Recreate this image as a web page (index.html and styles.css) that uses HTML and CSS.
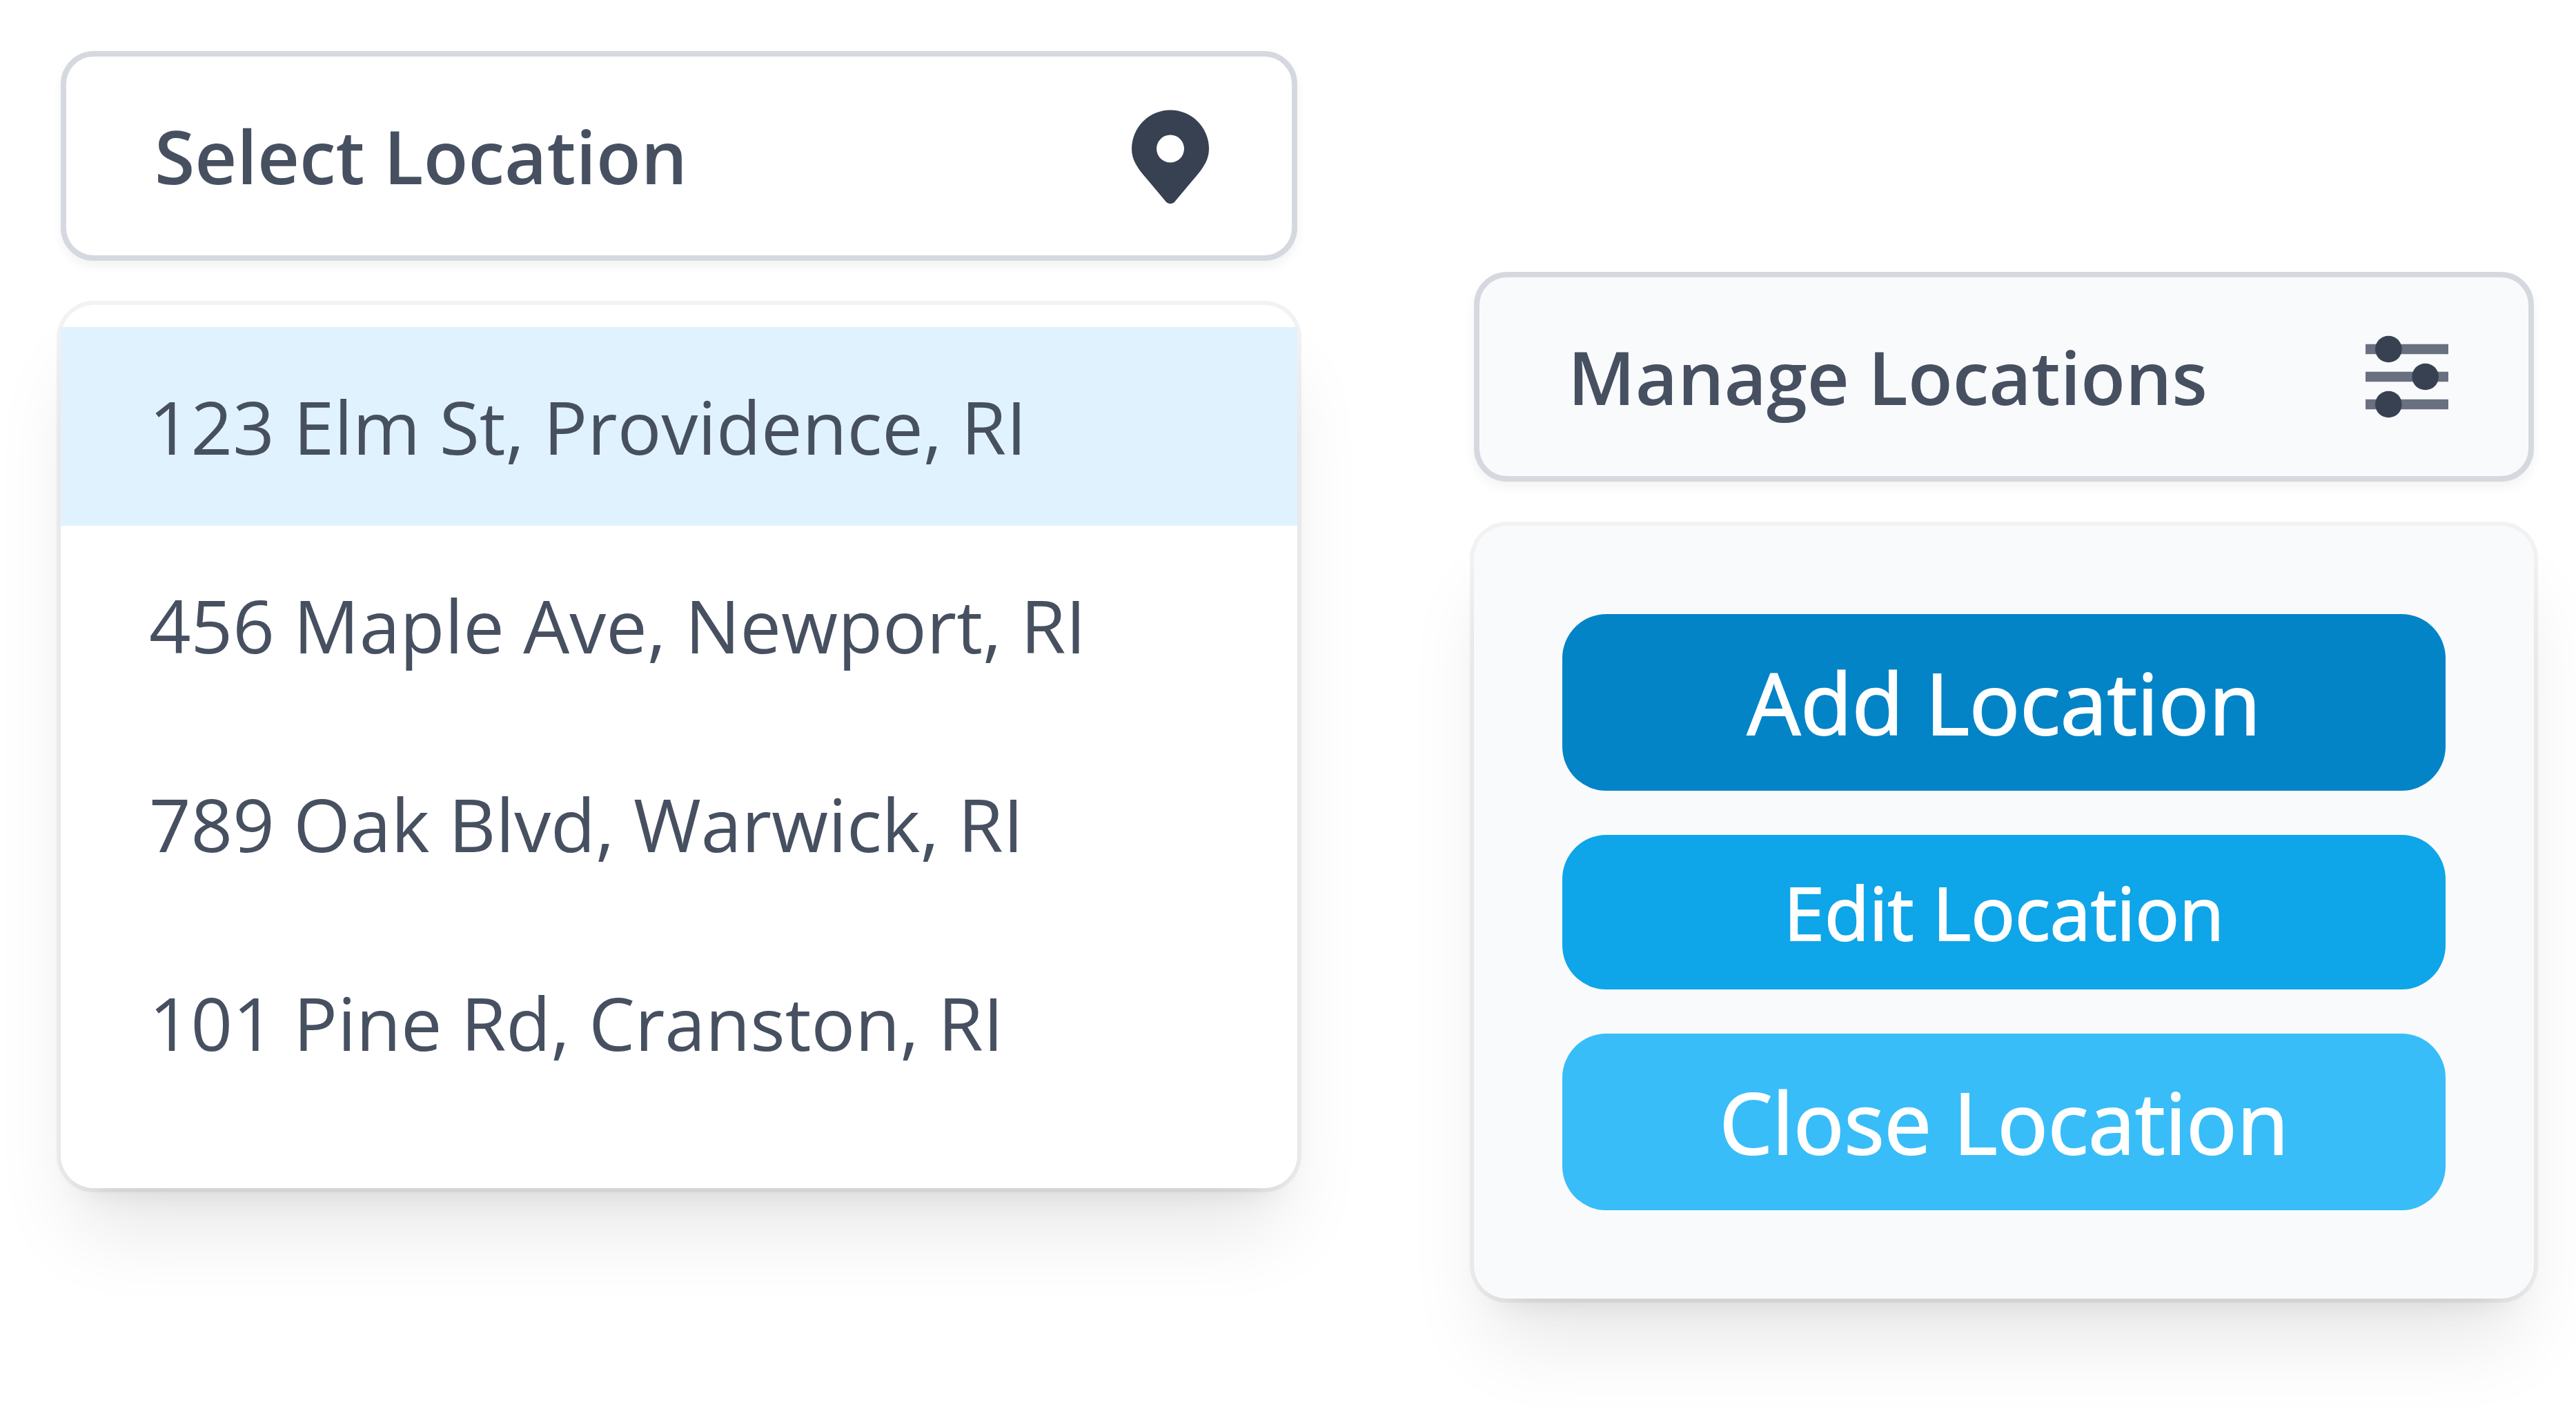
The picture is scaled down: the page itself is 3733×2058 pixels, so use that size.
FILE: index.html
```html
<!DOCTYPE html>
<html lang="en">
<head>
  <meta charset="utf-8">
  <meta name="viewport" content="width=device-width, initial-scale=1">
  <title>Locations</title>
  <link rel="stylesheet" href="styles.css">
</head>
<body>
  <main class="page">
    <section class="dropdown">
      <button class="trigger" type="button" aria-haspopup="true" aria-expanded="true" aria-controls="location-menu">
        <span>Select Location</span>
        <svg class="icon" viewBox="0 0 20 20" aria-hidden="true">
          <path fill="currentColor" fill-rule="evenodd" d="M9.3 18.4 6.1 14.6C4.3 12.5 3 11 3 8.7a7 7 0 0 1 14 0c0 2.300-1.300 3.800-3.100 5.900L10.700 18.400q-.7.5-1.400 0zM10 11.200a2.500 2.500 0 1 0 0-5 2.500 2.500 0 0 0 0 5z"/>
        </svg>
      </button>
      <ul class="panel menu" id="location-menu">
        <li><a class="option option-active" href="#elm">123 Elm St, Providence, RI</a></li>
        <li><a class="option" href="#maple">456 Maple Ave, Newport, RI</a></li>
        <li><a class="option" href="#oak">789 Oak Blvd, Warwick, RI</a></li>
        <li><a class="option" href="#pine">101 Pine Rd, Cranston, RI</a></li>
      </ul>
    </section>

    <section class="dropdown dropdown-manage">
      <button class="trigger" type="button" aria-haspopup="true" aria-expanded="true" aria-controls="manage-menu">
        <span>Manage Locations</span>
        <svg class="icon" viewBox="0 0 24 24" aria-hidden="true">
          <path class="rails" d="M3 6h18M3 12h18M3 18h18"/>
          <g fill="currentColor">
            <circle cx="8" cy="6" r="2.9"/>
            <circle cx="16" cy="12" r="2.9"/>
            <circle cx="8" cy="18" r="2.9"/>
          </g>
        </svg>
      </button>
      <div class="panel actions" id="manage-menu">
        <button class="action action-add" type="button">Add Location</button>
        <button class="action action-edit" type="button">Edit Location</button>
        <button class="action action-close" type="button">Close Location</button>
      </div>
    </section>
  </main>
</body>
</html>
```

FILE: styles.css
```css
* {
  box-sizing: border-box;
}

body {
  margin: 0;
  background: #fff;
  color: #465060;
  font-family: "Open Sans", "Noto Sans", sans-serif;
}

.page {
  display: grid;
  grid-template-columns: 7fr 6fr;
  align-items: start;
  gap: 256px;
  padding: 74px 61px 174px 88px;
}

.dropdown {
  display: grid;
  gap: 64px;
}

.dropdown-manage {
  padding-top: 320px;
}

.trigger {
  display: flex;
  align-items: center;
  justify-content: space-between;
  width: 100%;
  padding: 64px 96px 64px 128px;
  border: 8px solid #d5d9df;
  border-radius: 48px;
  background: #fff;
  box-shadow: 0 8px 16px rgb(0 0 0 / 5%);
  color: inherit;
  font: 600 106px/160px "Open Sans", "Noto Sans", sans-serif;
}

.dropdown-manage .trigger,
.actions {
  background: #f9fafc;
}

.icon {
  width: 160px;
  height: 160px;
  color: #374151;
}

.rails {
  fill: none;
  stroke: #697080;
  stroke-width: 2.2;
}

.panel {
  margin: 0;
  border-radius: 48px;
  box-shadow:
    0 0 0 6px rgb(0 0 0 / 5%),
    0 80px 120px -24px rgb(0 0 0 / 10%),
    0 32px 48px -32px rgb(0 0 0 / 10%);
}

.menu {
  padding: 32px 0 96px;
  background: #fff;
  list-style: none;
}

.option {
  display: block;
  padding: 64px 128px;
  color: inherit;
  font-size: 106px;
  line-height: 160px;
  text-decoration: none;
}

.option-active {
  background: #e0f2fe;
}

.actions {
  display: grid;
  gap: 64px;
  padding: 128px;
}

.action {
  padding: 32px;
  border: 0;
  border-radius: 64px;
  color: #fff;
  font: 500 122px/192px "Open Sans", "Noto Sans", sans-serif;
  -webkit-text-stroke: 2px currentColor;
}

.action-add {
  background: #0284c7;
}

.action-edit {
  background: #0ea5e9;
  font-size: 106px;
  line-height: 160px;
}

.action-close {
  background: #38bdf8;
}
```
